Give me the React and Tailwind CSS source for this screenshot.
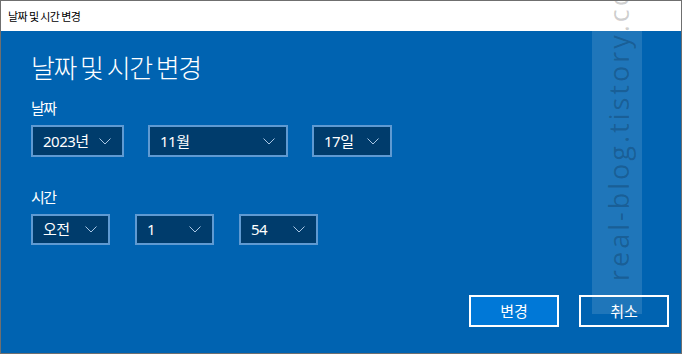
import { useState } from "react";

const font = {
  fontFamily: '"Noto Sans", "Noto Sans CJK KR", sans-serif',
};

function Chevron() {
  return (
    <svg width="12" height="7" viewBox="0 0 12 7" className="shrink-0">
      <path d="M0.5 0.5 L6 6 L11.5 0.5" fill="none" stroke="#a9c6e4" strokeWidth="1" />
    </svg>
  );
}

function Select({ value, width }) {
  return (
    <div
      className="flex items-center justify-between h-full border-2 border-[#5f9ad2] bg-[#003c6c] pl-[10px] pr-[11px] text-white text-[15px]"
      style={{ width }}
    >
      <span className="leading-none tracking-[-0.5px]">{value}</span>
      <Chevron />
    </div>
  );
}

export default function App() {
  const [year] = useState("2023년");

  return (
    <div
      className="relative w-[682px] h-[354px] border border-[#6f6f6f] flex flex-col overflow-hidden bg-white"
      style={font}
    >
      {/* title bar */}
      <div className="h-[30px] flex items-center pl-[7px] bg-white">
        <span className="text-[11px] tracking-[-0.6px] text-black" style={{ fontFamily: '"Noto Sans CJK KR", sans-serif' }}>
          날짜 및 시간 변경
        </span>
      </div>

      {/* body */}
      <div className="flex-1 bg-[#0063b1] flex flex-col pl-[30px] pr-[12px] pt-[18px]">
        <div
          className="h-[36px] leading-[36px] text-[26px] font-light tracking-[-1.5px] text-white"
          style={{ fontFamily: '"Noto Sans CJK KR", sans-serif' }}
        >
          날짜 및 시간 변경
        </div>

        <div
          className="mt-[13px] h-[20px] leading-[20px] text-[15px] tracking-[-1.5px] text-white"
          style={{ fontFamily: '"Noto Sans CJK KR", sans-serif' }}
        >
          날짜
        </div>
        <div className="mt-[7px] h-[32px] flex gap-[24px]">
          <Select value={year} width={93} />
          <Select value="11월" width={140} />
          <Select value="17일" width={80} />
        </div>

        <div
          className="mt-[30px] h-[20px] leading-[20px] text-[15px] tracking-[-1.5px] text-white"
          style={{ fontFamily: '"Noto Sans CJK KR", sans-serif' }}
        >
          시간
        </div>
        <div className="mt-[7px] h-[31px] flex gap-[25px]">
          <Select value="오전" width={79} />
          <Select value="1" width={79} />
          <Select value="54" width={79} />
        </div>

        <div className="mt-[50px] flex justify-end gap-[20px]">
          <button className="w-[90px] h-[32px] border-2 border-white bg-[#0078d7] text-white text-[15px]">
            변경
          </button>
          <button className="w-[90px] h-[32px] border-2 border-white bg-[#0063b1] text-white text-[15px]">
            취소
          </button>
        </div>
      </div>

      {/* watermark */}
      <div className="absolute left-[591px] top-0 w-[50px] h-[313px] bg-white/12 overflow-hidden">
        <div
          className="absolute left-[8px] bottom-[33px] rotate-180 [writing-mode:vertical-rl] whitespace-nowrap text-[27px] tracking-[3px] leading-[38px] text-black/20"
          style={{ fontFamily: '"Open Sans", sans-serif' }}
        >
          real-blog.tistory.com
        </div>
      </div>
    </div>
  );
}
